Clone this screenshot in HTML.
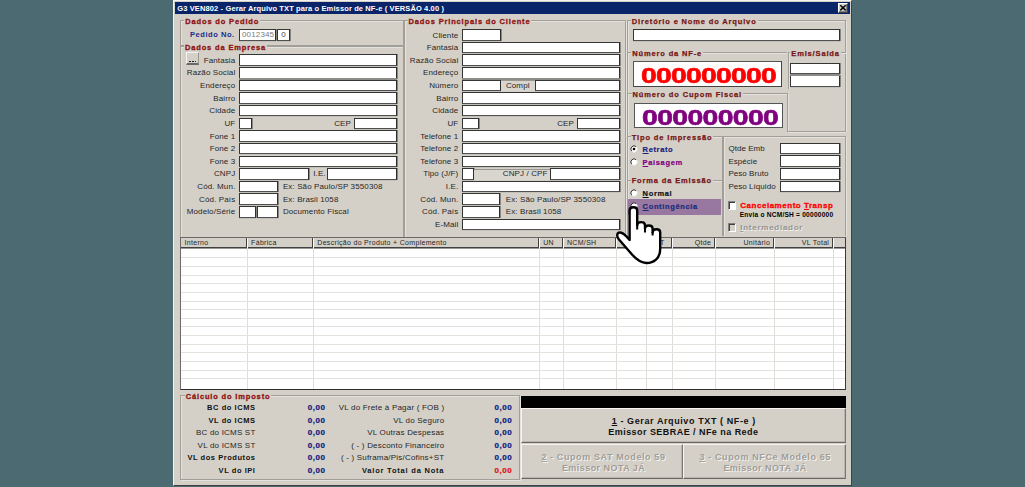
<!DOCTYPE html>
<html><head><meta charset="utf-8"><style>
*{margin:0;padding:0;box-sizing:border-box}
html,body{width:1025px;height:487px;overflow:hidden;background:#4b6a72;font-family:"Liberation Sans",sans-serif}
.a{position:absolute}
.t{white-space:pre}
.n{font-size:8px;letter-spacing:0.12px;color:#262626}
.b{font-size:7.5px;letter-spacing:0.6px;color:#111;font-weight:bold}
.gt{font-size:7.5px;letter-spacing:0.84px;color:#8f1212;font-weight:bold;-webkit-text-stroke:0.3px currentColor}
.fr{border:1px solid #a29f99;box-shadow:inset 1px 1px 0 #e4e2dd,1px 1px 0 #e4e2dd}
.inp{background:#fff;border:1px solid #353535;border-right-color:#2e2e2e;border-bottom-color:#505050;box-shadow:1px 0 0 #8a8780,0 1px 0 #c4c1ba;font-size:8px;letter-spacing:0.1px;line-height:9.5px;padding-left:2px;color:#222}
.win{background:#d4d0c8}
.btn{background:#d4d0c8;border:1px solid;border-color:#fff #404040 #404040 #fff;box-shadow:inset -1px -1px 0 #808080}
.fbtn{background:#d4d0c8;border:1px solid;border-color:#f6f5f2 #7a7872 #6a6862 #f6f5f2;box-shadow:inset -1px -1px 0 #b8b5ae}
.sbtn{background:#d4d0c8;border:1px solid;border-color:#f4f4f4 #9a9790 #6a6a6a #f4f4f4}
.grid{background:#fff}

.gt2{font-size:7.5px;letter-spacing:0.85px;color:#761515;font-weight:bold;-webkit-text-stroke:0.25px currentColor}
.dig{font-size:22.5px;font-weight:bold;letter-spacing:-0.6px;transform:scaleX(1.26);transform-origin:left center;-webkit-text-stroke:0.6px currentColor}
.rad{width:7px;height:7px;border-radius:50%;background:#fff;border:1px solid #808080;border-right-color:#fff;border-bottom-color:#fff;box-shadow:inset 1px 1px 0 #404040}
.rb{font-size:7.5px;letter-spacing:0.64px;font-weight:bold;-webkit-text-stroke:0.2px currentColor}
.chk{background:#fff;border:1px solid;border-color:#808080 #fff #fff #808080;box-shadow:inset 1px 1px 0 #404040}
</style></head><body>
<div class="a win" style="left:173px;top:0px;width:679px;height:486px;border-left:1px solid #f4f3f0;border-top:1px solid #f4f3f0;border-right:1px solid #404040;border-bottom:1px solid #404040"></div>
<div class="a " style="left:175px;top:2px;width:675px;height:12px;background:#0a246a"></div>
<div class="a t " style="left:177.3px;top:2.6px;line-height:12px;font-size:7.5px;letter-spacing:0.12px;color:#fff;font-weight:bold">G3 VEN802 - Gerar Arquivo TXT para o Emissor de NF-e ( VERSÃO 4.00 )</div>
<div class="a btn" style="left:838px;top:3px;width:10px;height:9.5px;"></div>
<svg class="a" style="left:838px;top:3px" width="10" height="10"><path d="M2.3 2.2 L7.7 7.4 M7.7 2.2 L2.3 7.4" stroke="#000" stroke-width="1.5"/></svg>
<div class="a fr" style="left:180px;top:20px;width:224px;height:26px;"></div>
<div class="a t gt" style="left:185.3px;top:16.6px;line-height:10px;background:#d4d0c8;padding:0 1px 0 1px;margin-left:-1px">Dados do Pedido</div>
<div class="a t b" style="left:190px;top:30.3px;line-height:10px;color:#1a2a8a;letter-spacing:0.55px">Pedido No.</div>
<div class="a inp" style="left:239px;top:29.2px;width:37px;height:11.5px;color:#7a7a7a;letter-spacing:0.15px">0012345</div>
<div class="a inp" style="left:277px;top:29.2px;width:13px;height:11.5px;text-align:center;padding:0;color:#444">0</div>
<div class="a fr" style="left:180px;top:46px;width:224px;height:194px;"></div>
<div class="a t gt" style="left:185px;top:42.6px;line-height:10px;background:#d4d0c8;padding:0 1px 0 1px;margin-left:-1px">Dados da Empresa</div>
<div class="a sbtn" style="left:186px;top:52.2px;width:13px;height:13.3px;border-bottom-width:2px"></div>
<div class="a " style="left:189.3px;top:60.8px;width:1.7px;height:1.7px;background:#000;border-radius:50%"></div>
<div class="a " style="left:192px;top:60.8px;width:1.7px;height:1.7px;background:#000;border-radius:50%"></div>
<div class="a " style="left:194.7px;top:60.8px;width:1.7px;height:1.7px;background:#000;border-radius:50%"></div>
<div class="a t n" style="right:789.7px;top:55.81px;line-height:10px;text-align:right;">Fantasia</div>
<div class="a inp" style="left:239px;top:54.46px;width:158px;height:11.5px;"></div>
<div class="a t n" style="right:789.7px;top:68.44px;line-height:10px;text-align:right;">Razão Social</div>
<div class="a inp" style="left:239px;top:67.09px;width:158px;height:11.5px;"></div>
<div class="a t n" style="right:789.7px;top:81.07px;line-height:10px;text-align:right;">Endereço</div>
<div class="a inp" style="left:239px;top:79.72px;width:158px;height:11.5px;"></div>
<div class="a t n" style="right:789.7px;top:93.7px;line-height:10px;text-align:right;">Bairro</div>
<div class="a inp" style="left:239px;top:92.35px;width:158px;height:11.5px;"></div>
<div class="a t n" style="right:789.7px;top:106.33px;line-height:10px;text-align:right;">Cidade</div>
<div class="a inp" style="left:239px;top:104.98px;width:158px;height:11.5px;"></div>
<div class="a t n" style="right:789.7px;top:118.96px;line-height:10px;text-align:right;">UF</div>
<div class="a inp" style="left:239px;top:117.61px;width:13px;height:11.5px;"></div>
<div class="a t n" style="right:674px;top:118.96px;line-height:10px;text-align:right;">CEP</div>
<div class="a inp" style="left:354.3px;top:117.61px;width:42.7px;height:11.5px;"></div>
<div class="a t n" style="right:789.7px;top:131.59px;line-height:10px;text-align:right;">Fone 1</div>
<div class="a inp" style="left:239px;top:130.24px;width:158px;height:11.5px;"></div>
<div class="a t n" style="right:789.7px;top:144.22px;line-height:10px;text-align:right;">Fone 2</div>
<div class="a inp" style="left:239px;top:142.87px;width:158px;height:11.5px;"></div>
<div class="a t n" style="right:789.7px;top:156.85px;line-height:10px;text-align:right;">Fone 3</div>
<div class="a inp" style="left:239px;top:155.5px;width:158px;height:11.5px;"></div>
<div class="a t n" style="right:789.7px;top:169.48px;line-height:10px;text-align:right;">CNPJ</div>
<div class="a inp" style="left:239px;top:168.13px;width:69.5px;height:11.5px;"></div>
<div class="a t n" style="right:699.3px;top:169.48px;line-height:10px;text-align:right;">I.E.</div>
<div class="a inp" style="left:327.2px;top:168.13px;width:69.8px;height:11.5px;"></div>
<div class="a t n" style="right:789.7px;top:182.11px;line-height:10px;text-align:right;">Cód. Mun.</div>
<div class="a inp" style="left:239px;top:180.76px;width:39.4px;height:11.5px;"></div>
<div class="a t n" style="left:282.9px;top:182.11px;line-height:10px;">Ex: São Paulo/SP 3550308</div>
<div class="a t n" style="right:789.7px;top:194.74px;line-height:10px;text-align:right;">Cód. País</div>
<div class="a inp" style="left:239px;top:193.39px;width:39.4px;height:11.5px;"></div>
<div class="a t n" style="left:282.9px;top:194.74px;line-height:10px;">Ex: Brasil 1058</div>
<div class="a t n" style="right:789.7px;top:207.37px;line-height:10px;text-align:right;">Modelo/Série</div>
<div class="a inp" style="left:239px;top:206.02px;width:17px;height:11.5px;"></div>
<div class="a inp" style="left:257.2px;top:206.02px;width:21.2px;height:11.5px;"></div>
<div class="a t n" style="left:282.9px;top:207.37px;line-height:10px;">Documento Fiscal</div>
<div class="a " style="left:239px;top:78.2px;width:158px;height:2px;background:#8e8c88"></div>
<div class="a fr" style="left:404px;top:20px;width:222px;height:220px;"></div>
<div class="a t gt" style="left:408.6px;top:16.6px;line-height:10px;background:#d4d0c8;padding:0 1px 0 1px;margin-left:-1px">Dados Principais do Cliente</div>
<div class="a t n" style="right:566.7px;top:30.55px;line-height:10px;text-align:right;">Cliente</div>
<div class="a inp" style="left:462.3px;top:29.2px;width:38.7px;height:11.5px;"></div>
<div class="a t n" style="right:566.7px;top:43.18px;line-height:10px;text-align:right;">Fantasia</div>
<div class="a inp" style="left:462.3px;top:41.83px;width:157.4px;height:11.5px;"></div>
<div class="a t n" style="right:566.7px;top:55.81px;line-height:10px;text-align:right;">Razão Social</div>
<div class="a inp" style="left:462.3px;top:54.46px;width:157.4px;height:11.5px;"></div>
<div class="a t n" style="right:566.7px;top:68.44px;line-height:10px;text-align:right;">Endereço</div>
<div class="a inp" style="left:462.3px;top:67.09px;width:157.4px;height:11.5px;"></div>
<div class="a t n" style="right:566.7px;top:81.07px;line-height:10px;text-align:right;">Número</div>
<div class="a inp" style="left:462.3px;top:79.72px;width:38.7px;height:11.5px;"></div>
<div class="a " style="left:501px;top:80.22px;width:33.5px;height:11px;background:#d9d6d0;border-top:1px solid #9a978f"></div>
<div class="a t n" style="left:505.9px;top:81.07px;line-height:10px;">Compl</div>
<div class="a inp" style="left:534.5px;top:79.72px;width:85.2px;height:11.5px;"></div>
<div class="a t n" style="right:566.7px;top:93.7px;line-height:10px;text-align:right;">Bairro</div>
<div class="a inp" style="left:462.3px;top:92.35px;width:157.4px;height:11.5px;"></div>
<div class="a t n" style="right:566.7px;top:106.33px;line-height:10px;text-align:right;">Cidade</div>
<div class="a inp" style="left:462.3px;top:104.98px;width:157.4px;height:11.5px;"></div>
<div class="a t n" style="right:566.7px;top:118.96px;line-height:10px;text-align:right;">UF</div>
<div class="a inp" style="left:462.3px;top:117.61px;width:16.5px;height:11.5px;"></div>
<div class="a t n" style="right:451px;top:118.96px;line-height:10px;text-align:right;">CEP</div>
<div class="a inp" style="left:577px;top:117.61px;width:42.7px;height:11.5px;"></div>
<div class="a t n" style="right:566.7px;top:131.59px;line-height:10px;text-align:right;">Telefone 1</div>
<div class="a inp" style="left:462.3px;top:130.24px;width:157.4px;height:11.5px;"></div>
<div class="a t n" style="right:566.7px;top:144.22px;line-height:10px;text-align:right;">Telefone 2</div>
<div class="a inp" style="left:462.3px;top:142.87px;width:157.4px;height:11.5px;"></div>
<div class="a t n" style="right:566.7px;top:156.85px;line-height:10px;text-align:right;">Telefone 3</div>
<div class="a inp" style="left:462.3px;top:155.5px;width:157.4px;height:11.5px;"></div>
<div class="a t n" style="right:566.7px;top:169.48px;line-height:10px;text-align:right;">Tipo (J/F)</div>
<div class="a inp" style="left:462.3px;top:168.13px;width:11.5px;height:11.5px;"></div>
<div class="a " style="left:474px;top:168.63px;width:75.8px;height:11px;background:#d9d6d0;border-top:1px solid #9a978f"></div>
<div class="a t n" style="right:477.5px;top:169.48px;line-height:10px;text-align:right;">CNPJ / CPF</div>
<div class="a inp" style="left:549.8px;top:168.13px;width:69.9px;height:11.5px;"></div>
<div class="a t n" style="right:566.7px;top:182.11px;line-height:10px;text-align:right;">I.E.</div>
<div class="a inp" style="left:462.3px;top:180.76px;width:157.4px;height:11.5px;"></div>
<div class="a t n" style="right:566.7px;top:194.74px;line-height:10px;text-align:right;">Cód. Mun.</div>
<div class="a inp" style="left:462.3px;top:193.39px;width:38.1px;height:11.5px;"></div>
<div class="a t n" style="left:505.8px;top:194.74px;line-height:10px;">Ex: São Paulo/SP 3550308</div>
<div class="a t n" style="right:566.7px;top:207.37px;line-height:10px;text-align:right;">Cód. País</div>
<div class="a inp" style="left:462.3px;top:206.02px;width:38.1px;height:11.5px;"></div>
<div class="a t n" style="left:505.8px;top:207.37px;line-height:10px;">Ex: Brasil 1058</div>
<div class="a t n" style="right:566.7px;top:220px;line-height:10px;text-align:right;">E-Mail</div>
<div class="a inp" style="left:462.3px;top:218.65px;width:157.4px;height:11.5px;"></div>
<div class="a " style="left:462.3px;top:78.2px;width:157.4px;height:2px;background:#8e8c88"></div>
<div class="a " style="left:627px;top:20px;width:218.5px;height:1px;background:#a29f99"></div>
<div class="a " style="left:628px;top:21px;width:217.5px;height:1px;background:#e4e2dd"></div>
<div class="a " style="left:627px;top:20px;width:1px;height:216px;background:#a29f99"></div>
<div class="a " style="left:628px;top:21px;width:1px;height:215px;background:#e4e2dd"></div>
<div class="a " style="left:845px;top:20px;width:1px;height:111.5px;background:#a29f99"></div>
<div class="a " style="left:846px;top:21px;width:1px;height:110.5px;background:#e4e2dd"></div>
<div class="a t gt2" style="left:631.8px;top:16.6px;line-height:10px;background:#d4d0c8;padding:0 1px;margin-left:-1px">Diretório e Nome do Arquivo</div>
<div class="a inp" style="left:633px;top:29.2px;width:206.5px;height:11.8px;"></div>
<div class="a " style="left:627px;top:52px;width:160px;height:1px;background:#a29f99"></div>
<div class="a " style="left:628px;top:53px;width:159px;height:1px;background:#e4e2dd"></div>
<div class="a t gt2" style="left:632.3px;top:48.6px;line-height:10px;background:#d4d0c8;padding:0 1px;margin-left:-1px">Número da NF-e</div>
<div class="a " style="left:787.5px;top:52px;width:58px;height:1px;background:#a29f99"></div>
<div class="a " style="left:788.5px;top:53px;width:57px;height:1px;background:#e4e2dd"></div>
<div class="a " style="left:787.5px;top:52px;width:1px;height:37px;background:#a29f99"></div>
<div class="a " style="left:788.5px;top:53px;width:1px;height:36px;background:#e4e2dd"></div>
<div class="a t gt2" style="left:791.3px;top:48.6px;line-height:10px;background:#d4d0c8;padding:0 1px;margin-left:-1px">Emis/Saída</div>
<div class="a " style="left:627px;top:93px;width:160.5px;height:1px;background:#a29f99"></div>
<div class="a " style="left:628px;top:94px;width:159.5px;height:1px;background:#e4e2dd"></div>
<div class="a " style="left:787px;top:93px;width:1px;height:38.5px;background:#a29f99"></div>
<div class="a " style="left:788px;top:94px;width:1px;height:37.5px;background:#e4e2dd"></div>
<div class="a " style="left:787px;top:131px;width:58.5px;height:1px;background:#a29f99"></div>
<div class="a " style="left:788px;top:132px;width:57.5px;height:1px;background:#e4e2dd"></div>
<div class="a t gt2" style="left:632.5px;top:90.4px;line-height:10px;background:#d4d0c8;padding:0 1px;margin-left:-1px">Número do Cupom Fiscal</div>
<div class="a " style="left:627px;top:136px;width:94.5px;height:1px;background:#a29f99"></div>
<div class="a " style="left:628px;top:137px;width:93.5px;height:1px;background:#e4e2dd"></div>
<div class="a " style="left:721.5px;top:136px;width:1px;height:100px;background:#a29f99"></div>
<div class="a " style="left:722.5px;top:137px;width:1px;height:99px;background:#e4e2dd"></div>
<div class="a t gt2" style="left:631.8px;top:132.6px;line-height:10px;background:#d4d0c8;padding:0 1px;margin-left:-1px">Tipo de Impressão</div>
<div class="a " style="left:722.5px;top:136px;width:123px;height:1px;background:#a29f99"></div>
<div class="a " style="left:723.5px;top:137px;width:122px;height:1px;background:#e4e2dd"></div>
<div class="a " style="left:722.5px;top:136px;width:1px;height:100px;background:#a29f99"></div>
<div class="a " style="left:723.5px;top:137px;width:1px;height:99px;background:#e4e2dd"></div>
<div class="a " style="left:845px;top:136px;width:1px;height:100px;background:#a29f99"></div>
<div class="a " style="left:846px;top:137px;width:1px;height:99px;background:#e4e2dd"></div>
<div class="a " style="left:627px;top:180px;width:94.5px;height:1px;background:#a29f99"></div>
<div class="a " style="left:628px;top:181px;width:93.5px;height:1px;background:#e4e2dd"></div>
<div class="a t gt2" style="left:631.7px;top:176.4px;line-height:10px;background:#d4d0c8;padding:0 1px;margin-left:-1px">Forma da Emissão</div>
<div class="a " style="left:633px;top:61.3px;width:149px;height:25.6px;background:#fff;border:1px solid #555;border-right-color:#444;border-bottom-color:#444"></div>
<div class="a t dig" style="left:641px;top:66px;line-height:20px;color:#f00">000000000</div>
<div class="a inp" style="left:790px;top:62.8px;width:49.8px;height:11px;"></div>
<div class="a inp" style="left:790px;top:75.4px;width:49.8px;height:11.2px;"></div>
<div class="a " style="left:790px;top:73.8px;width:49.8px;height:1.8px;background:#8e8c88"></div>
<div class="a " style="left:634.3px;top:103.2px;width:148.3px;height:25.3px;background:#fff;border:1px solid #555"></div>
<div class="a t dig" style="left:641.8px;top:108.4px;line-height:20px;color:#800080;letter-spacing:-0.5px">000000000</div>
<svg class="a" style="left:629.4px;top:144.2px" width="10" height="10"><circle cx="5" cy="5" r="3" fill="#fff"/><path d="M2.8 7.2 A3.1 3.1 0 0 1 7.2 2.8" stroke="#333" stroke-width="1" fill="none"/><path d="M7.2 2.8 A3.1 3.1 0 0 1 2.8 7.2" stroke="#f4f4f4" stroke-width="0.9" fill="none"/><circle cx="5" cy="5" r="1.3" fill="#000"/></svg>
<div class="a t rb" style="left:642.6px;top:145px;line-height:10px;color:#1a237e"><u>R</u>etrato</div>
<svg class="a" style="left:629.4px;top:156.7px" width="10" height="10"><circle cx="5" cy="5" r="3" fill="#fff"/><path d="M2.8 7.2 A3.1 3.1 0 0 1 7.2 2.8" stroke="#333" stroke-width="1" fill="none"/><path d="M7.2 2.8 A3.1 3.1 0 0 1 2.8 7.2" stroke="#f4f4f4" stroke-width="0.9" fill="none"/></svg>
<div class="a t rb" style="left:642.6px;top:157.8px;line-height:10px;color:#800080"><u>P</u>aisagem</div>
<svg class="a" style="left:629.4px;top:187.6px" width="10" height="10"><circle cx="5" cy="5" r="3" fill="#fff"/><path d="M2.8 7.2 A3.1 3.1 0 0 1 7.2 2.8" stroke="#333" stroke-width="1" fill="none"/><path d="M7.2 2.8 A3.1 3.1 0 0 1 2.8 7.2" stroke="#f4f4f4" stroke-width="0.9" fill="none"/></svg>
<div class="a t rb" style="left:642.6px;top:188.5px;line-height:10px;color:#111"><u>N</u>ormal</div>
<div class="a " style="left:628.1px;top:199.1px;width:92.8px;height:15.6px;background:#9878a0"></div>
<svg class="a" style="left:629.4px;top:200.6px" width="10" height="10"><circle cx="5" cy="5" r="3" fill="#fff"/><path d="M2.8 7.2 A3.1 3.1 0 0 1 7.2 2.8" stroke="#333" stroke-width="1" fill="none"/><path d="M7.2 2.8 A3.1 3.1 0 0 1 2.8 7.2" stroke="#f4f4f4" stroke-width="0.9" fill="none"/></svg>
<div class="a t rb" style="left:642.6px;top:201.6px;line-height:10px;color:#1a2a7a"><u>C</u>ontingência</div>
<div class="a t n" style="left:728.4px;top:143.9px;line-height:10px;letter-spacing:0.05px">Qtde Emb</div>
<div class="a inp" style="left:780.2px;top:142.8px;width:59.6px;height:11.5px;"></div>
<div class="a t n" style="left:728.4px;top:156.55px;line-height:10px;letter-spacing:0.05px">Espécie</div>
<div class="a inp" style="left:780.2px;top:155.45px;width:59.6px;height:11.5px;"></div>
<div class="a t n" style="left:728.4px;top:169.2px;line-height:10px;letter-spacing:0.05px">Peso Bruto</div>
<div class="a inp" style="left:780.2px;top:168.1px;width:59.6px;height:11.5px;"></div>
<div class="a t n" style="left:728.4px;top:181.85px;line-height:10px;letter-spacing:0.05px">Peso Líquido</div>
<div class="a inp" style="left:780.2px;top:180.75px;width:59.6px;height:11.5px;"></div>
<div class="a chk" style="left:727.5px;top:201.2px;width:8.5px;height:8.5px;"></div>
<div class="a t gt" style="left:740.3px;top:200.8px;line-height:10px;color:#f00;letter-spacing:0.52px;font-size:8px">Cancelamento <u>T</u>ransp</div>
<div class="a t b" style="left:739.7px;top:209.9px;line-height:10px;font-size:6.6px;letter-spacing:0.22px;color:#000">Envia o NCM/SH = 00000000</div>
<div class="a chk" style="left:727.5px;top:223.2px;width:8.5px;height:8.4px;background:#d4d0c8"></div>
<div class="a t gt" style="left:740.3px;top:223px;line-height:10px;color:#9b9893;letter-spacing:0.73px;font-size:8px;text-shadow:0.6px 0.6px 0 #f6f6f6;-webkit-text-stroke:0.15px #9b9893"><u>I</u>ntermediador</div>
<div class="a grid" style="left:180px;top:236.5px;width:665.5px;height:153.5px;border-top:1px solid #6a6a6a;border-left:1px solid #6a6a6a;border-right:1px solid #3a3a3a;border-bottom:1px solid #303030"></div>
<div class="a " style="left:181px;top:237.5px;width:663.5px;height:10.7px;background:#d4d0c8;border-bottom:1px solid #404040;box-shadow:0 1px 0 #9a9892"></div>
<div class="a " style="left:246.1px;top:237.5px;width:2px;height:10px;border-left:1px solid #404040;border-right:1px solid #fff"></div>
<div class="a " style="left:246.6px;top:248px;width:1px;height:141px;background:#e0ded8"></div>
<div class="a " style="left:312.3px;top:237.5px;width:2px;height:10px;border-left:1px solid #404040;border-right:1px solid #fff"></div>
<div class="a " style="left:312.8px;top:248px;width:1px;height:141px;background:#e0ded8"></div>
<div class="a " style="left:538.2px;top:237.5px;width:2px;height:10px;border-left:1px solid #404040;border-right:1px solid #fff"></div>
<div class="a " style="left:538.7px;top:248px;width:1px;height:141px;background:#e0ded8"></div>
<div class="a " style="left:562px;top:237.5px;width:2px;height:10px;border-left:1px solid #404040;border-right:1px solid #fff"></div>
<div class="a " style="left:562.5px;top:248px;width:1px;height:141px;background:#e0ded8"></div>
<div class="a " style="left:615px;top:237.5px;width:2px;height:10px;border-left:1px solid #404040;border-right:1px solid #fff"></div>
<div class="a " style="left:615.5px;top:248px;width:1px;height:141px;background:#e0ded8"></div>
<div class="a " style="left:645.5px;top:237.5px;width:2px;height:10px;border-left:1px solid #404040;border-right:1px solid #fff"></div>
<div class="a " style="left:646px;top:248px;width:1px;height:141px;background:#e0ded8"></div>
<div class="a " style="left:671.2px;top:237.5px;width:2px;height:10px;border-left:1px solid #404040;border-right:1px solid #fff"></div>
<div class="a " style="left:671.7px;top:248px;width:1px;height:141px;background:#e0ded8"></div>
<div class="a " style="left:714.1px;top:237.5px;width:2px;height:10px;border-left:1px solid #404040;border-right:1px solid #fff"></div>
<div class="a " style="left:714.6px;top:248px;width:1px;height:141px;background:#e0ded8"></div>
<div class="a " style="left:773.1px;top:237.5px;width:2px;height:10px;border-left:1px solid #404040;border-right:1px solid #fff"></div>
<div class="a " style="left:773.6px;top:248px;width:1px;height:141px;background:#e0ded8"></div>
<div class="a " style="left:832.2px;top:237.5px;width:2px;height:10px;border-left:1px solid #404040;border-right:1px solid #fff"></div>
<div class="a " style="left:832.7px;top:248px;width:1px;height:141px;background:#e0ded8"></div>
<div class="a t n" style="left:184.5px;top:237.9px;line-height:10px;font-size:7px;letter-spacing:0.31px">Interno</div>
<div class="a t n" style="left:251.1px;top:237.9px;line-height:10px;font-size:7px;letter-spacing:0.31px">Fábrica</div>
<div class="a t n" style="left:317.3px;top:237.9px;line-height:10px;font-size:7px;letter-spacing:0.31px">Descrição do Produto + Complemento</div>
<div class="a t n" style="left:543.2px;top:237.9px;line-height:10px;font-size:7px;letter-spacing:0.31px">UN</div>
<div class="a t n" style="left:567px;top:237.9px;line-height:10px;font-size:7px;letter-spacing:0.31px">NCM/SH</div>
<div class="a t n" style="right:382.5px;top:237.9px;line-height:10px;text-align:right;font-size:7px;letter-spacing:0.31px">CFOP</div>
<div class="a t n" style="right:360.3px;top:237.9px;line-height:10px;text-align:right;font-size:7px;letter-spacing:0.31px">CST</div>
<div class="a t n" style="right:313.9px;top:237.9px;line-height:10px;text-align:right;font-size:7px;letter-spacing:0.31px">Qtde</div>
<div class="a t n" style="right:254.9px;top:237.9px;line-height:10px;text-align:right;font-size:7px;letter-spacing:0.31px">Unitário</div>
<div class="a t n" style="right:195.8px;top:237.9px;line-height:10px;text-align:right;font-size:7px;letter-spacing:0.31px">VL Total</div>
<div class="a t n" style="left:837.2px;top:237.9px;line-height:10px;font-size:7px;letter-spacing:0.31px"></div>
<div class="a " style="left:181px;top:257.3px;width:663.5px;height:1px;background:#e4e2dc"></div>
<div class="a " style="left:181px;top:265.94px;width:663.5px;height:1px;background:#e4e2dc"></div>
<div class="a " style="left:181px;top:274.58px;width:663.5px;height:1px;background:#e4e2dc"></div>
<div class="a " style="left:181px;top:283.22px;width:663.5px;height:1px;background:#e4e2dc"></div>
<div class="a " style="left:181px;top:291.86px;width:663.5px;height:1px;background:#e4e2dc"></div>
<div class="a " style="left:181px;top:300.5px;width:663.5px;height:1px;background:#e4e2dc"></div>
<div class="a " style="left:181px;top:309.14px;width:663.5px;height:1px;background:#e4e2dc"></div>
<div class="a " style="left:181px;top:317.78px;width:663.5px;height:1px;background:#e4e2dc"></div>
<div class="a " style="left:181px;top:326.42px;width:663.5px;height:1px;background:#e4e2dc"></div>
<div class="a " style="left:181px;top:335.06px;width:663.5px;height:1px;background:#e4e2dc"></div>
<div class="a " style="left:181px;top:343.7px;width:663.5px;height:1px;background:#e4e2dc"></div>
<div class="a " style="left:181px;top:352.34px;width:663.5px;height:1px;background:#e4e2dc"></div>
<div class="a " style="left:181px;top:360.98px;width:663.5px;height:1px;background:#e4e2dc"></div>
<div class="a " style="left:181px;top:369.62px;width:663.5px;height:1px;background:#e4e2dc"></div>
<div class="a " style="left:181px;top:378.26px;width:663.5px;height:1px;background:#e4e2dc"></div>
<div class="a fr" style="left:180px;top:395px;width:340px;height:84.5px;"></div>
<div class="a t gt" style="left:185.7px;top:392.1px;line-height:10px;background:#d4d0c8;padding:0 1px 0 1px;margin-left:-1px">Cálculo do Imposto</div>
<div class="a t b" style="right:769.5px;top:402.9px;line-height:10px;text-align:right;letter-spacing:0.55px">BC do ICMS</div>
<div class="a t b" style="right:699.5px;top:402.9px;line-height:10px;text-align:right;color:#0c1a80;font-size:8px;letter-spacing:0.55px;-webkit-text-stroke:0.2px currentColor">0,00</div>
<div class="a t n" style="right:580.7px;top:402.9px;line-height:10px;text-align:right;letter-spacing:0.2px">VL do Frete à Pagar ( FOB )</div>
<div class="a t b" style="right:512.7px;top:402.9px;line-height:10px;text-align:right;color:#0c1a80;font-size:8px;letter-spacing:0.55px;-webkit-text-stroke:0.2px currentColor">0,00</div>
<div class="a t b" style="right:769.5px;top:415.5px;line-height:10px;text-align:right;letter-spacing:0.55px">VL do ICMS</div>
<div class="a t b" style="right:699.5px;top:415.5px;line-height:10px;text-align:right;color:#0c1a80;font-size:8px;letter-spacing:0.55px;-webkit-text-stroke:0.2px currentColor">0,00</div>
<div class="a t n" style="right:580.7px;top:415.5px;line-height:10px;text-align:right;letter-spacing:0.2px">VL do Seguro</div>
<div class="a t b" style="right:512.7px;top:415.5px;line-height:10px;text-align:right;color:#0c1a80;font-size:8px;letter-spacing:0.55px;-webkit-text-stroke:0.2px currentColor">0,00</div>
<div class="a t n" style="right:769.5px;top:428.1px;line-height:10px;text-align:right;letter-spacing:0.2px">BC do ICMS ST</div>
<div class="a t b" style="right:699.5px;top:428.1px;line-height:10px;text-align:right;color:#0c1a80;font-size:8px;letter-spacing:0.55px;-webkit-text-stroke:0.2px currentColor">0,00</div>
<div class="a t n" style="right:580.7px;top:428.1px;line-height:10px;text-align:right;letter-spacing:0.2px">VL Outras Despesas</div>
<div class="a t b" style="right:512.7px;top:428.1px;line-height:10px;text-align:right;color:#0c1a80;font-size:8px;letter-spacing:0.55px;-webkit-text-stroke:0.2px currentColor">0,00</div>
<div class="a t n" style="right:769.5px;top:440.7px;line-height:10px;text-align:right;letter-spacing:0.2px">VL do ICMS ST</div>
<div class="a t b" style="right:699.5px;top:440.7px;line-height:10px;text-align:right;color:#0c1a80;font-size:8px;letter-spacing:0.55px;-webkit-text-stroke:0.2px currentColor">0,00</div>
<div class="a t n" style="right:580.7px;top:440.7px;line-height:10px;text-align:right;letter-spacing:0.2px">( - ) Desconto Financeiro</div>
<div class="a t b" style="right:512.7px;top:440.7px;line-height:10px;text-align:right;color:#0c1a80;font-size:8px;letter-spacing:0.55px;-webkit-text-stroke:0.2px currentColor">0,00</div>
<div class="a t b" style="right:769.5px;top:453.3px;line-height:10px;text-align:right;letter-spacing:0.55px">VL dos Produtos</div>
<div class="a t b" style="right:699.5px;top:453.3px;line-height:10px;text-align:right;color:#0c1a80;font-size:8px;letter-spacing:0.55px;-webkit-text-stroke:0.2px currentColor">0,00</div>
<div class="a t n" style="right:580.7px;top:453.3px;line-height:10px;text-align:right;letter-spacing:0.2px">( - ) Suframa/Pis/Cofins+ST</div>
<div class="a t b" style="right:512.7px;top:453.3px;line-height:10px;text-align:right;color:#0c1a80;font-size:8px;letter-spacing:0.55px;-webkit-text-stroke:0.2px currentColor">0,00</div>
<div class="a t b" style="right:769.5px;top:465.9px;line-height:10px;text-align:right;letter-spacing:0.55px">VL do IPI</div>
<div class="a t b" style="right:699.5px;top:465.9px;line-height:10px;text-align:right;color:#0c1a80;font-size:8px;letter-spacing:0.55px;-webkit-text-stroke:0.2px currentColor">0,00</div>
<div class="a t b" style="right:580.7px;top:465.9px;line-height:10px;text-align:right;letter-spacing:0.79px">Valor Total da Nota</div>
<div class="a t b" style="right:512.7px;top:465.9px;line-height:10px;text-align:right;color:#e01010;font-size:8px;letter-spacing:0.55px;-webkit-text-stroke:0.2px currentColor">0,00</div>
<div class="a " style="left:521px;top:396px;width:325px;height:12.3px;background:#000"></div>
<div class="a fbtn" style="left:521px;top:408.3px;width:325px;height:35px;"></div>
<div class="a t b" style="left:611.7px;top:416.3px;line-height:11px;font-size:9px;letter-spacing:0.45px;color:#111;letter-spacing:0.6px"><u>1</u> - Gerar Arquivo TXT ( NF-e )</div>
<div class="a t b" style="left:608.3px;top:426.8px;line-height:11px;font-size:9px;letter-spacing:0.45px;color:#111">Emissor SEBRAE / NFe na Rede</div>
<div class="a fbtn" style="left:521px;top:443.5px;width:162px;height:35.8px;"></div>
<div class="a fbtn" style="left:683px;top:443.5px;width:163px;height:35.8px;"></div>
<div class="a t b" style="left:541.4px;top:451.7px;line-height:11px;font-size:9px;letter-spacing:0.45px;color:#a09d98;text-shadow:1px 1px 0 #f4f3f0;letter-spacing:0.6px"><u>2</u> - Cupom SAT Modelo 59</div>
<div class="a t b" style="left:561.9px;top:462.7px;line-height:11px;font-size:9px;letter-spacing:0.45px;color:#a09d98;text-shadow:1px 1px 0 #f4f3f0">Emissor NOTA JÁ</div>
<div class="a t b" style="left:699.5px;top:451.7px;line-height:11px;font-size:9px;letter-spacing:0.45px;color:#a09d98;text-shadow:1px 1px 0 #f4f3f0;letter-spacing:0.62px"><u>3</u> - Cupom NFCe Modelo 65</div>
<div class="a t b" style="left:723.4px;top:462.7px;line-height:11px;font-size:9px;letter-spacing:0.45px;color:#a09d98;text-shadow:1px 1px 0 #f4f3f0">Emissor NOTA JÁ</div>
<svg class="a" style="left:600px;top:195px" width="80" height="80" viewBox="600 195 80 80">
<path d="M629.6 240 L629.6 210.5 C629.6 206.2 637.2 206.2 637.2 210.5 L637.2 225.3 C637.2 221 645 221 645 225.3 L645 228.6 C645 224.4 652.6 224.4 652.6 228.6 L652.6 232.4 C652.6 228.2 660.2 228.2 660.2 232.4 L660.2 249 C660.2 258.5 653.5 263 646.5 263 C640 263 636 259 632 254.5 L619 239.5 C616 236 617 232.5 620 232.5 C622.5 232.5 624.5 234.5 626.5 236.5 L629.6 240 Z" fill="#fff" stroke="#000" stroke-width="2.4" stroke-linejoin="round"/>
<path d="M637.2 225 L637.2 229.5 M645 228.5 L645 232.5 M652.6 232 L652.6 235.5" stroke="#000" stroke-width="2" fill="none"/>
</svg>
</body></html>
